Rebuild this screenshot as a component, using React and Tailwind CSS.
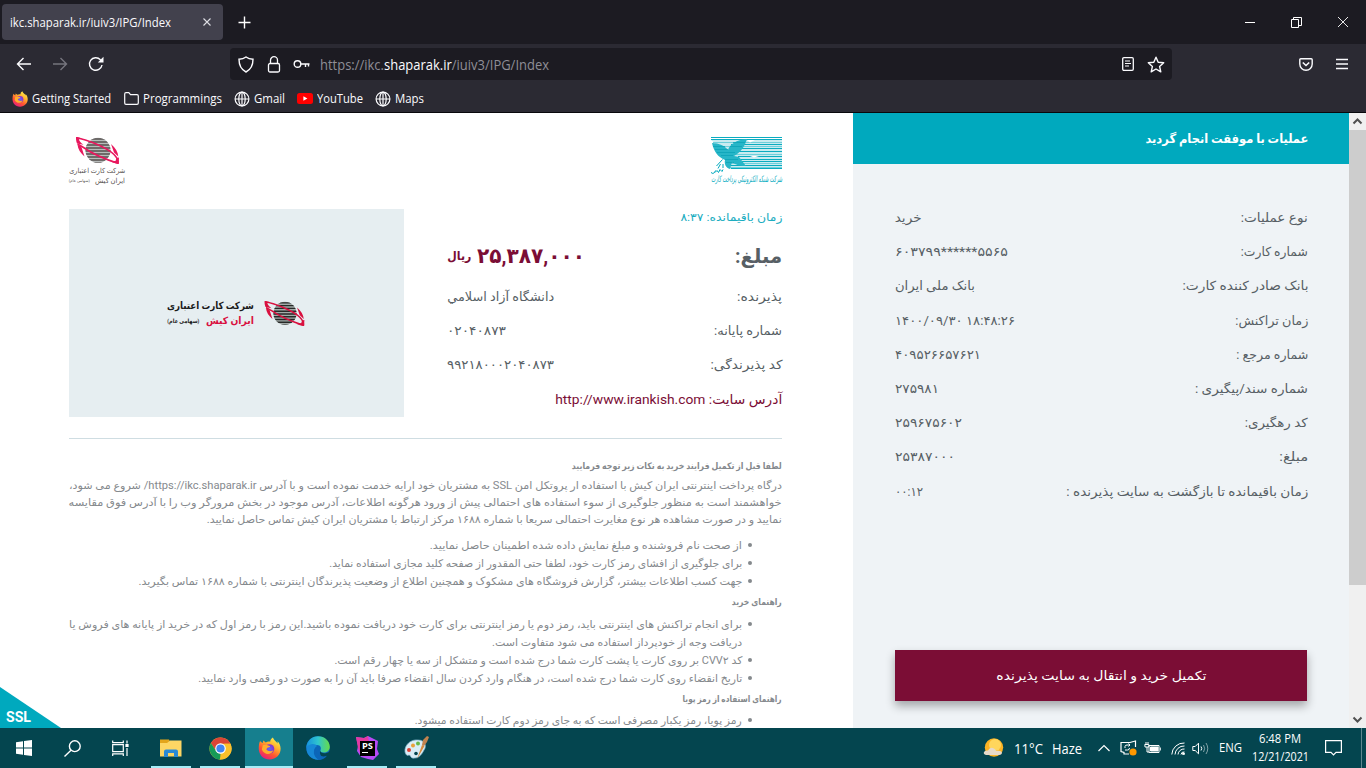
import { useLayoutEffect, useRef } from "react";

/* Scales one line of text horizontally so that it fills its box. */
function Fit({ children, className = "", rtl = false }) {
  const box = useRef(null);
  const inner = useRef(null);
  useLayoutEffect(() => {
    const fit = () => {
      const w = inner.current.getBoundingClientRect().width / (inner.current._s || 1);
      const s = box.current.clientWidth / w;
      inner.current._s = s;
      inner.current.style.transform = `scaleX(${s})`;
    };
    fit();
    if (document.fonts) document.fonts.ready.then(fit);
  }, []);
  return (
    <span ref={box} dir={rtl ? "rtl" : "ltr"} className={"flex shrink-0 " + className}>
      <span ref={inner} className={"shrink-0 whitespace-nowrap " + (rtl ? "origin-right" : "origin-left")}>{children}</span>
    </span>
  );
}

const FA = "font-['Roboto','DejaVu_Sans',sans-serif]";
const UI = "font-['Open_Sans','Noto_Sans',sans-serif]";

function FirefoxIcon({ className, id }) {
  return (
    <svg className={className} viewBox="0 0 24 24">
      <defs>
        <linearGradient id={id + "a"} x1="0.8" y1="0" x2="0.2" y2="1">
          <stop offset="0" stopColor="#fff44f" /><stop offset="0.35" stopColor="#ffb02e" />
          <stop offset="0.65" stopColor="#ff5630" /><stop offset="1" stopColor="#e31587" />
        </linearGradient>
        <radialGradient id={id + "b"}><stop offset="0" stopColor="#5b6df8" /><stop offset="1" stopColor="#8b2fc9" /></radialGradient>
      </defs>
      <path fill={`url(#${id}a)`} d="M15.500 0.500c-2 1.200-2.700 2.800-2.800 4.400-1.800-.3-3.500 0-4.600.8L5.500 3.700 5 6.200C3.700 6 2.500 4.800 2.200 4.200 1.300 6 1 8 .8 10.500.2 18 5 23.500 12 23.500S23.800 18 23.600 12c-.1-3.500-1.500-5.800-3.300-7.500l.2 2.200C19 4.200 16.500 3.500 15.500.5z" />
      <circle cx="12" cy="12.500" r="5" fill={`url(#${id}b)`} />
      <path fill="#ffae2c" d="M5 8.500c2 0 4-.2 6.500.5 1 .3 1.800 1.200 0 1.800-1.700.5-2.500 1-2.700 2.300 1.500 1.700 4.500 2.500 7.200.7-1.600 5-9.500 5.500-12-.8z" />
    </svg>
  );
}

function Globe() {
  return (
    <svg className="h-[16px] w-[16px] shrink-0" viewBox="0 0 16 16" fill="none" stroke="#fbfbfe" strokeWidth="1.200">
      <circle cx="8" cy="8" r="6.900" /><ellipse cx="8" cy="8" rx="3.200" ry="6.900" /><path d="M1 8h14M8 1v14" />
    </svg>
  );
}

function Planet({ className, id, red = "#e8175d", dark = "#55504f", light = "#b8bcbb" }) {
  return (
    <svg className={className} viewBox="0 0 43 27">
      <clipPath id={id}><circle cx="22" cy="13.300" r="12.500" /></clipPath>
      <g clipPath={`url(#${id})`}>
        <rect x="8" width="28" height="27" fill={light} />
        <path stroke={dark} strokeWidth="1.500" d="M8 2h28M8 5h28M8 8h28M8 11h28M8 14h28M8 17h28M8 20h28M8 23h28M8 26h28" />
      </g>
      <path fill="none" stroke={red} strokeWidth="1.600" d="M.8 1C10 2 31 10.500 38 17.500c3.500 3.500 4.500 6 4 8.700C30 22.500 16 16.500 7.500 10.500 5 8.800 3 7.500 1.500 7.200" />
      <path fill={red} d="M0 0c2 0 4 .6 6.500 1.500L3 2c0 2 1.500 3.500 4.500 5.800L1 6.500C.2 4.500-.2 2 0 0zM1.500 7.500l3.800 2L8.500 19.500C4.500 16 1.800 12 1.500 7.500zM35 7c4.500 4 7 8 7.300 12.500L38 15.500zM43 20.500l-.5 6.500C39.500 26.500 37 25.700 34 24.500l5.500-.5 1-3z" />
    </svg>
  );
}

function ShaparakLogo() {
  return (
    <div className="relative h-[49px] w-[71px] text-[#00a9be]">
      <svg className="block h-[33px] w-[71px]" viewBox="0 0 71 33">
        <path fill="#c9ebf0" d="M0 3h72v29H19l-6-11L2 14l2-8z" />
        <path stroke="#0aacc0" strokeWidth="1" d="M0 .5h72M0 2.500h72M20 7.500h52M22 11.500h50M25 14.500h47M27 19.500h45M14 22.500h58M14 24.500h58M18 28.500h54M20 31.500h52" />
        <path stroke="#6fcfda" strokeWidth="1" d="M2 5.500h70M3 9.500h69M24 17.500h48M15 26.500h57M18 30.500h54" />
        <path fill="#fff" d="M0 6l11 15.500 2 1.500v9.500H0zM13 23l6 9.500h-6z" />
        <path fill="#27b6c8" d="M1 6c7 0 13 3 16 7 2-6 8-10 19-11-2 7-6 13-13 17l5 1 7 9c-6 0-10-1-14-4l-2 7c-4-1-6-5-5-9C7 20 3 15 1 6z" />
        <path stroke="#0ba3b8" strokeWidth=".8" d="M2 9.500h12M4 12.500h13M6 15.500h18M10 18.500h12M14 22.500h13M15 25.500h8M22 5.500h12M19 9.500h12" />
        <path fill="#fff" d="M36 3l8 0-5 2.500zM39 19l9 0-5 1.500z" />
      </svg>
      <svg className="absolute top-[22px] left-0 h-[16px] w-[14px]" viewBox="0 0 14 16" fill="none" stroke="#00a9be" strokeWidth="1"><path d="M0 13.500q2 2 3.500 0l1-2M4 13.500l2-2 1.500 2 1.500-3 2 2 1-2M11.500 .5L5.500 7M9.500 5L7 9.500M12 5v4" /></svg>
      <Fit rtl className="mt-[3px] h-[13px] w-[71px] text-[9px] leading-[13px] font-['DejaVu_Sans',sans-serif] italic">شرکت شبکه الکترونیکی پرداخت کارت</Fit>
    </div>
  );
}

function BrowserChrome() {
  const S = "none";
  return (
    <header dir="ltr" className={"flex h-[113px] shrink-0 flex-col border-b border-[#08080c] bg-[#2b2a33] text-[#fbfbfe] " + UI}>
      <div className="flex h-[44px] items-center bg-[#1c1b22] pl-[2px]">
        <div className="flex h-[36px] w-[221px] items-center rounded-[4px] bg-[#42414d] pl-[8px]">
          <Fit className="w-[161px] pt-[1px] text-[12px]">ikc.shaparak.ir/iuiv3/IPG/Index</Fit>
          <svg className="ml-[31px] h-[10px] w-[10px]" viewBox="0 0 10 10"><path d="M1.500 1.500l7 7M8.500 1.500l-7 7" stroke="#dedee4" strokeWidth="1.100" /></svg>
        </div>
        <svg className="ml-[15px] h-[13px] w-[13px]" viewBox="0 0 13 13"><path d="M6.500 .5v12M.5 6.500h12" stroke="#fff" strokeWidth="1.400" /></svg>
        <div className="ml-auto flex items-center gap-[35px] pr-[17px]">
          <svg className="h-[11px] w-[12px]" viewBox="0 0 12 11"><path d="M1 5.500h10" stroke="#fff" /></svg>
          <svg className="h-[11px] w-[11px]" viewBox="0 0 11 11" fill="none" stroke="#fff"><path d="M.5 2.500h7v8h-7zM2.500 2.500v-2h8v8h-3" /></svg>
          <svg className="h-[12px] w-[12px]" viewBox="0 0 12 12"><path d="M1 1l10 10M11 1L1 11" stroke="#fff" strokeWidth=".9" /></svg>
        </div>
      </div>
      <div className="flex h-[40px] items-center pl-[16px]">
        <svg className="h-[14px] w-[16px]" viewBox="0 0 16 14" fill={S} stroke="#fbfbfe" strokeWidth="1.400"><path d="M15 7H1.500M7.500 1l-6 6 6 6" /></svg>
        <svg className="ml-[20px] h-[14px] w-[16px]" viewBox="0 0 16 14" fill={S} stroke="#76757e" strokeWidth="1.400"><path d="M1 7h13.500M8.500 1l6 6-6 6" /></svg>
        <svg className="ml-[20px] h-[16px] w-[16px]" viewBox="0 0 16 16" fill={S} stroke="#fbfbfe" strokeWidth="1.400"><path d="M14 9a6.300 6.300 0 1 1-1.600-5.300L14.500 5.500" /><path fill="#fbfbfe" stroke="none" d="M15.500 .8v5.700H9.800z" /></svg>
        <div className="ml-[126px] flex h-[32px] w-[942px] items-center rounded-[4px] bg-[#1c1b22] pl-[8px]">
          <svg className="h-[17px] w-[16px]" viewBox="0 0 16 17" fill={S} stroke="#fbfbfe" strokeWidth="1.400"><path d="M8 1c2 1.600 4.500 2.300 7 2.300 0 6-1.500 10-7 12.700C2.500 13.300 1 9.300 1 3.300 3.500 3.300 6 2.600 8 1z" /></svg>
          <svg className="ml-[13px] h-[17px] w-[14px]" viewBox="0 0 14 17" fill={S} stroke="#fbfbfe" strokeWidth="1.300"><rect x="1.500" y="7.500" width="11" height="8.500" rx="1.500" /><path d="M3.500 7.500V4.200a3.500 3.500 0 0 1 7 0v3.300" /></svg>
          <svg className="ml-[12px] h-[10px] w-[17px]" viewBox="0 0 17 10" fill={S} stroke="#fbfbfe" strokeWidth="1.400"><circle cx="4.500" cy="5" r="3.300" /><path d="M8 5h8.500M12.500 5v3M15.500 5v2.500" /></svg>
          <Fit className="ml-[10px] w-[229px] pt-[2px] text-[14px] leading-[20px]"><span className="text-[#8f8e96]">https://ikc.</span>shaparak.ir<span className="text-[#8f8e96]">/iuiv3/IPG/Index</span></Fit>
          <svg className="ml-auto h-[14px] w-[12px]" viewBox="0 0 12 14" fill={S} stroke="#fbfbfe" strokeWidth="1.300"><rect x=".7" y=".7" width="10.600" height="12.600" rx="1.200" /><path d="M3 4h5M3 6.500h6M3 9h4" strokeWidth="1" /></svg>
          <svg className="mr-[7px] ml-[13px] h-[17px] w-[18px]" viewBox="0 0 18 17" fill={S} stroke="#fbfbfe" strokeWidth="1.400" strokeLinejoin="round"><path d="M9 1.200l2.200 5 5.500.5-4.100 3.700 1.200 5.400L9 13l-4.800 2.800 1.200-5.400L1.300 6.700l5.500-.5z" /></svg>
        </div>
        <svg className="ml-[127px] h-[13px] w-[14px]" viewBox="0 0 14 13" fill={S} stroke="#fbfbfe" strokeWidth="1.400"><path d="M1.800 .8h10.400q1 0 1 1V6a6.200 6.200 0 0 1-12.400 0V1.800q0-1 1-1z" /><path d="M3.800 4.500L7 7.500l3.200-3" strokeWidth="1.600" /></svg>
        <svg className="ml-[23px] h-[12px] w-[12px]" viewBox="0 0 12 12"><path d="M0 1.500h12M0 6h12M0 10.500h12" stroke="#fbfbfe" strokeWidth="1.300" /></svg>
      </div>
      <div className="flex h-[28px] items-center pt-[1px] pl-[12px] text-[12px] leading-[20px]">
        <FirefoxIcon className="h-[16px] w-[16px]" id="fb" />
        <Fit className="ml-[4px] w-[79px]">Getting Started</Fit>
        <svg className="ml-[13px] h-[13px] w-[15px]" viewBox="0 0 15 13" fill={S} stroke="#fbfbfe" strokeWidth="1.200"><path d="M.7 11V2q0-1.300 1.300-1.300h2.800L6.500 2.600H13q1.300 0 1.300 1.300V11q0 1.300-1.300 1.300H2Q.7 12.300 .7 11z" /></svg>
        <Fit className="ml-[4px] w-[79px]">Programmings</Fit>
        <div className="ml-[12px] flex items-center"><Globe /><Fit className="ml-[4px] w-[31px]">Gmail</Fit></div>
        <svg className="ml-[12px] h-[11px] w-[16px]" viewBox="0 0 16 11"><rect width="16" height="11" rx="2.500" fill="#f00" /><path d="M6.400 3.200v4.600l4-2.300z" fill="#fff" /></svg>
        <Fit className="ml-[4px] w-[46px]">YouTube</Fit>
        <div className="ml-[12px] flex items-center"><Globe /><Fit className="ml-[4px] w-[29px]">Maps</Fit></div>
      </div>
    </header>
  );
}

const MERCHANT = [
  ["پذیرنده:", "w-[45px]", "دانشگاه آزاد اسلامي", "w-[107px]", true],
  ["شماره پایانه:", "w-[68px]", "۰۲۰۴۰۸۷۳", "w-[59px]"],
  ["کد پذیرندگی:", "w-[72px]", "۹۹۲۱۸۰۰۰۲۰۴۰۸۷۳", "w-[107px]"],
];

const RECEIPT = [
  ["نوع عملیات:", "w-[67px]", "خرید", "w-[27px]", true],
  ["شماره کارت:", "w-[67px]", "۶۰۳۷۹۹******۵۵۶۵", "w-[113px]"],
  ["بانک صادر کننده کارت:", "w-[126px]", "بانک ملی ایران", "w-[80px]", true],
  ["زمان تراکنش:", "w-[73px]", "۱۴۰۰/۰۹/۳۰ ۱۸:۴۸:۲۶", "w-[120px]"],
  ["شماره مرجع :", "w-[72px]", "۴۰۹۵۲۶۶۵۷۶۲۱", "w-[86px]"],
  ["شماره سند/پیگیری :", "w-[113px]", "۲۷۵۹۸۱", "w-[44px]"],
  ["کد رهگیری:", "w-[63px]", "۲۵۹۶۷۵۶۰۲", "w-[67px]"],
  ["مبلغ:", "w-[29px]", "۲۵۳۸۷۰۰۰", "w-[60px]"],
  ["زمان باقیمانده تا بازگشت به سایت پذیرنده :", "w-[242px]", "۰۰:۱۲", "w-[28px]"],
];

function Bullet({ w, children, dot = true }) {
  return (
    <li className="flex h-[18px] items-center">
      <span className="flex w-[40px] shrink-0 justify-end pl-[6px]">
        <span className={"h-[4px] w-[4px] rounded-full " + (dot ? "bg-[#85898d]" : "")} />
      </span>
      <Fit rtl className={w}>{children}</Fit>
    </li>
  );
}

function Payment() {
  return (
    <main dir="rtl" className="relative h-[615px] w-[853px] shrink-0 overflow-hidden bg-white pr-[71px] pl-[69px]">
      <div className="flex h-[96px] items-start justify-between pt-[24px]">
        <ShaparakLogo />
        <div className="flex w-[56px] flex-col items-center text-[#55504f]">
          <Planet id="p1" className="h-[27px] w-[43px]" />
          <Fit rtl className={"mt-[2px] w-[56px] text-[7px] leading-[10px] " + FA}>شرکت کارت اعتباری</Fit>
          <div className="flex w-[56px] justify-between">
            <Fit rtl className={"w-[30px] text-[7px] leading-[10px] " + FA}>ایران کیش</Fit>
            <Fit rtl className={"w-[21px] text-[4px] leading-[10px] " + FA}>(سهامی عام)</Fit>
          </div>
        </div>
      </div>
      <section className="flex h-[208px] justify-between">
        <div className={"w-[335px] text-[12.500px] leading-[20px] text-[#575f65] " + FA}>
          <Fit rtl className="h-[27px] w-[102px] text-[11px] leading-[17px] text-[#1badbf]">زمان باقیمانده: ۸:۳۷</Fit>
          <div className="flex h-[44px] items-center justify-between">
            <Fit rtl className="w-[47px] pb-[4px] text-[20px] leading-[36px] font-bold">مبلغ:</Fit>
            <div className="flex items-center gap-[6px] pb-[5px] font-bold text-[#7b0d35]">
              <Fit className="w-[108px] text-[21px] leading-[30px]">۲۵,۳۸۷,۰۰۰</Fit>
              <Fit rtl className="w-[24px] text-[12px] leading-[30px]">ریال</Fit>
            </div>
          </div>
          {MERCHANT.map(([l, lw, v, vw, r]) => (
            <div key={l} className="flex h-[34px] items-center justify-between"><Fit rtl className={lw}>{l}</Fit><Fit rtl={!!r} className={vw}>{v}</Fit></div>
          ))}
          <div className="flex h-[34px] items-center text-[#7b0d35]"><Fit rtl className="w-[227px] text-[13.500px]">آدرس سایت: http://www.irankish.com</Fit></div>
        </div>
        <div className={"flex h-[208px] w-[335px] items-center justify-center gap-[10px] bg-[#e6eef1] pr-[1px] text-[#1b1b1b] " + FA}>
          <Planet id="p2" className="h-[25px] w-[41px]" red="#d9103f" dark="#272a28" light="#a3aba9" />
          <div className="w-[87px] text-[10px] leading-[15px] font-bold">
            <Fit rtl className="w-[87px]">شرکت کارت اعتباری</Fit>
            <div className="flex justify-between"><Fit rtl className="w-[48px] text-[#d9103f]">ایران کیش</Fit><Fit rtl className="w-[32px] text-[6px]">(سهامی عام)</Fit></div>
          </div>
        </div>
      </section>
      <div className="mt-[21px] h-[1px] bg-[#cfdde2]" />
      <section className={"pt-[18px] text-[10.500px] leading-[17px] text-[#85898d] " + FA}>
        <Fit rtl className="h-[20px] w-[210px] text-[9px] leading-[18px] font-bold">لطفا قبل از تکمیل فرایند خرید به نکات زیر توجه فرمایید</Fit>
        <Fit rtl className="h-[17px] w-[713px]">درگاه پرداخت اینترنتی ایران کیش با استفاده ار پروتکل امن SSL به مشتریان خود ارایه خدمت نموده است و با آدرس https://ikc.shaparak.ir/ شروع می شود،</Fit>
        <Fit rtl className="h-[17px] w-[713px]">خواهشمند است به منظور جلوگیری از سوء استفاده های احتمالی پیش از ورود هرگونه اطلاعات، آدرس موجود در بخش مرورگر وب را با آدرس فوق مقایسه</Fit>
        <Fit rtl className="h-[25px] w-[575px]">نمایید و در صورت مشاهده هر نوع مغایرت احتمالی سریعا با شماره ۱۶۸۸ مرکز ارتباط با مشتریان ایران کیش تماس حاصل نمایید.</Fit>
        <ul>
          <Bullet w="w-[312px]">از صحت نام فروشنده و مبلغ نمایش داده شده اطمینان حاصل نمایید.</Bullet>
          <Bullet w="w-[413px]">برای جلوگیری از افشای رمز کارت خود، لطفا حتی المقدور از صفحه کلید مجازی استفاده نماید.</Bullet>
          <Bullet w="w-[604px]">جهت کسب اطلاعات بیشتر، گزارش فروشگاه های مشکوک و همچنین اطلاع از وضعیت پذیرندگان اینترنتی با شماره ۱۶۸۸ تماس بگیرید.</Bullet>
        </ul>
        <Fit rtl className="mt-[3px] h-[22px] w-[50px] text-[9px] leading-[18px] font-bold">راهنمای خرید</Fit>
        <ul>
          <Bullet w="w-[673px]">برای انجام تراکنش های اینترنتی باید، رمز دوم یا رمز اینترنتی برای کارت خود دریافت نموده باشید.این رمز با رمز اول که در خرید از پایانه های فروش یا</Bullet>
          <Bullet dot={false} w="w-[250px]">دریافت وجه از خودپرداز استفاده می شود متفاوت است.</Bullet>
          <Bullet w="w-[408px]">کد CVV۲ بر روی کارت یا پشت کارت شما درج شده است و متشکل از سه یا چهار رقم است.</Bullet>
          <Bullet w="w-[544px]">تاریخ انقضاء روی کارت شما درج شده است، در هنگام وارد کردن سال انقضاء صرفا باید آن را به صورت دو رقمی وارد نمایید.</Bullet>
        </ul>
        <Fit rtl className="mt-[3px] h-[21px] w-[99px] text-[9px] leading-[18px] font-bold">راهنمای استفاده از رمز پویا</Fit>
        <ul><Bullet w="w-[327px]">رمز پویا، رمز یکبار مصرفی است که به جای رمز دوم کارت استفاده میشود.</Bullet></ul>
      </section>
      <div dir="ltr" className="absolute bottom-0 left-0 flex h-[41px] w-[61px] items-end bg-[#00a9be] pb-[2px] pl-[6px] [clip-path:polygon(0_0,100%_100%,0_100%)]">
        <Fit className="w-[25px] font-['Roboto',sans-serif] text-[14px] leading-[17px] font-bold text-white">SSL</Fit>
      </div>
    </main>
  );
}

function Receipt() {
  return (
    <aside dir="rtl" className={"flex w-[496px] shrink-0 flex-col bg-[#eff3f6] text-[12.500px] leading-[20px] text-[#575f65] " + FA}>
      <div className="flex h-[51px] items-center bg-[#00a9be] pr-[41px] text-white"><Fit rtl className="w-[163px] font-bold">عملیات با موفقت انجام گردید</Fit></div>
      <div className="pt-[37px] pr-[41px] pl-[42px]">
        {RECEIPT.map(([l, lw, v, vw, r]) => (
          <div key={l} className="flex h-[34.200px] items-center justify-between"><Fit rtl className={lw}>{l}</Fit><Fit rtl={!!r} className={vw}>{v}</Fit></div>
        ))}
      </div>
      <button className="mt-auto mr-[42px] mb-[27px] flex h-[51px] w-[412px] items-center justify-center bg-[#7b0d35] text-white shadow-[0_5px_9px_rgba(0,0,0,0.32)]">
        <Fit rtl className="w-[210px]">تکمیل خرید و انتقال به سایت پذیرنده</Fit>
      </button>
    </aside>
  );
}

function Scrollbar() {
  return (
    <div dir="ltr" className="flex w-[17px] shrink-0 flex-col items-center bg-[#f0f0f0]">
      <svg className="h-[17px] w-[17px]" viewBox="0 0 17 17"><path d="M4.500 10.500l4-4 4 4" fill="none" stroke="#505050" strokeWidth="2" /></svg>
      <div className="h-[455px] w-full bg-[#cdcdcd]" />
      <svg className="mt-auto h-[17px] w-[17px]" viewBox="0 0 17 17"><path d="M4.500 6.500l4 4 4-4" fill="none" stroke="#505050" strokeWidth="2" /></svg>
    </div>
  );
}

function TaskCell({ children, className = "", bar = "" }) {
  return (
    <div className={"flex h-[40px] shrink-0 flex-col items-center justify-between " + className}>
      <div className="flex h-[38px] items-center justify-center pt-[2px]">{children}</div>
      <div className={"h-[2px] " + bar} />
    </div>
  );
}

function Taskbar() {
  return (
    <footer dir="ltr" className={"flex h-[40px] shrink-0 bg-[#04454f] text-white " + UI}>
      <TaskCell className="w-[48px]"><svg className="h-[16px] w-[16px]" viewBox="0 0 16 16" fill="#fff"><path d="M0 2.200L7 1.200v6.300H0zM8 1l8-1v7.500H8zM0 8.500h7v6.300l-7-1zM8 8.500h8V16l-8-1z" /></svg></TaskCell>
      <TaskCell className="w-[48px]"><svg className="h-[17px] w-[17px]" viewBox="0 0 17 17" fill="none" stroke="#fff" strokeWidth="1.400"><circle cx="10.800" cy="6.200" r="5.400" /><path d="M7 10.200L.5 16.500" /></svg></TaskCell>
      <TaskCell className="w-[48px]"><svg className="h-[16px] w-[17px]" viewBox="0 0 17 16" fill="none" stroke="#fff" strokeWidth="1.200"><path d="M.7 4.600h10.600v7H.7zM.7 .500v2.200h10.600V.500M.7 16v-2.200h10.600V16M15 .500v3M15 8v8" /><path fill="#fff" d="M14 4.500h2v2h-2z" /></svg></TaskCell>
      <TaskCell className="ml-[3px] w-[48px]" bar="w-[40px] bg-[#a5edf7]">
        <svg className="h-[18px] w-[22px]" viewBox="0 0 22 18"><path fill="#e3a51b" d="M0 .5h9l1 2h-1l-1 3H0z" /><path fill="#fdd664" d="M0 4h7l3-2.500h11.500V17.500H0z" /><path fill="#2b8ad5" d="M4 18v-5.500Q4 10.500 6 10.500h10q2 0 2 2V18h-4v-4H8v4z" /></svg>
      </TaskCell>
      <TaskCell className="ml-[1px] w-[48px]" bar="w-[40px] bg-[#a5edf7]">
        <svg className="h-[23px] w-[23px]" viewBox="0 0 24 24"><circle cx="12" cy="12" r="11.500" fill="#fbc02d" /><path fill="#db4437" d="M2 6.300A11.500 11.500 0 0 1 22.400 7H12v5l-5 2z" /><path fill="#169b58" d="M2 6.300l5.400 8.200L12 17.500 11.500 23.500A11.500 11.500 0 0 1 2 6.300z" /><path fill="#fbc02d" d="M11 23.500L17 12l-1-5h6.400A11.500 11.500 0 0 1 11 23.500z" /><circle cx="12" cy="12" r="5.500" fill="#fff" /><circle cx="12" cy="12" r="4.300" fill="#4285f4" /></svg>
      </TaskCell>
      <TaskCell className="ml-[1px] w-[48px] bg-[#167f8e]" bar="w-[48px] bg-[#a5edf7]"><FirefoxIcon className="h-[23px] w-[23px]" id="ft" /></TaskCell>
      <TaskCell className="ml-[1px] w-[48px]">
        <svg className="h-[24px] w-[24px]" viewBox="0 0 24 24">
          <defs><linearGradient id="eg"><stop offset="0" stopColor="#1692dd" /><stop offset=".5" stopColor="#2fc5cf" /><stop offset="1" stopColor="#66dc48" /></linearGradient></defs>
          <circle cx="12" cy="12" r="11.800" fill="#0c66b8" />
          <path fill="url(#eg)" d="M.3 11.500C.8 4.500 6 .2 12 .2c7 0 11.800 5 11.800 10.500 0 4-3 5.800-6 5.800-2.500 0-4-1-3.500-2 1.300-1.700.7-5.500-3.300-5.500C6 9 1.500 11 .3 11.500z" />
          <path fill="#04454f" d="M14.500 14.200c-.5 1.800 1.200 3 3.800 3 2 0 3.900-.5 5.500-2V24h-3l-.7-3.200c-3.600 1.300-7.600-2.100-5.600-6.600z" />
          <path fill="#1788d6" d="M.5 11C5 6.500 10 8 11 10c-4 2-4 9.500 2 13.800C5 24 0 18 .5 11z" />
          <path fill="#0c66b8" d="M10.500 11c-2.500 5 2.500 11.500 10.500 8.700-2.500 3.200-5.500 4.200-8 4.200-6-3-6.500-10-2.500-12.900z" />
        </svg>
      </TaskCell>
      <TaskCell className="ml-[1px] w-[48px]" bar="w-[40px] bg-[#a5edf7]">
        <div className="relative flex h-[24px] w-[24px] items-center justify-center">
          <svg className="absolute inset-0 h-[24px] w-[24px]" viewBox="0 0 24 24"><path fill="#b74af7" d="M1 1l8 1 4-2 6 3 4 2-1 8 2 5-6 6-5-1-7-2-4-6 1-5z" /><path fill="#e33aa1" d="M1 1l8 1 4-2 1 6-9 11-2-5z" /></svg>
          <div className="relative flex h-[15px] w-[15px] flex-col items-start bg-black pl-[2px] font-['Open_Sans',sans-serif] text-[8px] leading-[10px] font-bold"><Fit className="w-[11px]">PS</Fit><span className="mt-[1px] h-[1px] w-[6px] bg-white" /></div>
        </div>
      </TaskCell>
      <TaskCell className="ml-[1px] w-[48px]" bar="w-[40px] bg-[#a5edf7]">
        <svg className="h-[24px] w-[25px]" viewBox="0 0 25 24"><path fill="#d9edf5" stroke="#84b6cd" strokeWidth=".7" d="M1 16C0 9 7 3 14 4c7 0 9 6 6 10-2 4-5 8-9 8-5 1-4-3-6-3-2 1-3 0-4-3z" /><circle cx="5" cy="14" r="2" fill="#dc4034" /><circle cx="9" cy="9.500" r="2" fill="#e9a13b" /><circle cx="14" cy="7.500" r="2" fill="#67b84a" /><circle cx="12" cy="17.500" r="1.800" fill="#04454f" /><path fill="#d98b3f" d="M13 23l5-14 2.500 1z" /><path fill="#c1824e" d="M18 9l1-5 4-4 2 1-2 5-3 4z" /></svg>
      </TaskCell>
      <div className="ml-auto flex items-center text-[14px] leading-[20px]">
        <svg className="h-[20px] w-[21px]" viewBox="0 0 21 20"><circle cx="11" cy="9.500" r="9.200" fill="#fbb324" /><circle cx="12" cy="7" r="6" fill="#ffd65c" /><path fill="#e7d9c8" d="M3 17q-3-1-2-3 1-2 4-1.500 2-4 6-2 2 1 2 2.500 5-1 6 1.500 0 2-3 2.500z" /></svg>
        <Fit className="ml-[10px] w-[29px] pt-[1px]">11°C</Fit><Fit className="ml-[9px] w-[30px] pt-[1px]">Haze</Fit>
        <svg className="ml-[16px] h-[8px] w-[12px]" viewBox="0 0 12 8"><path d="M.5 7L6 1.500 11.500 7" fill="none" stroke="#fff" strokeWidth="1.200" /></svg>
        <svg className="ml-[10px] h-[16px] w-[17px]" viewBox="0 0 17 16" fill="none" stroke="#fff" strokeWidth="1.200"><path d="M15.500 7V1L10 2.500H1v9l3 1v1.500h5" /><path d="M5 8V6.500q0-1.500 2-1.500h2.500M8.500 3.500L10 5 8.500 6.500M5 10h2.500q2 0 2-2" strokeWidth="1" /><circle cx="13" cy="12" r="3.600" fill="#ff9800" stroke="none" /></svg>
        <svg className="ml-[7px] h-[12px] w-[17px]" viewBox="0 0 17 12" fill="none" stroke="#fff"><path d="M5 3.500h10v7H5zM16.300 5.500v3M2 0v2M4 0v2M.8 2.500h4V5H1zM3 5v5h2" /><path fill="#fff" d="M6.500 5H14v4H6.500z" /></svg>
        <svg className="ml-[10px] h-[13px] w-[14px]" viewBox="0 0 14 13" fill="none" stroke="#fff"><path d="M.8 12.500A12 12 0 0 1 13.500 1M4 12.500A9 9 0 0 1 13.500 4M7 12.500a6 6 0 0 1 6.500-5.500M10 12.500a3 3 0 0 1 3.500-2.500" /><circle cx="12.500" cy="11.800" r="1" fill="#fff" /></svg>
        <svg className="ml-[7px] h-[13px] w-[17px]" viewBox="0 0 17 13" fill="none" stroke="#fff"><path d="M.8 4.500h2.400l3.300-3.300v10.600L3.200 8.500H.8z" /><path d="M9 4.500q1.500 2 0 4" /><path d="M11.500 3q2.300 3.500 0 7M14 1q3.500 5.500 0 11" opacity=".5" /></svg>
        <Fit className="ml-[10px] w-[23px] text-[12px]">ENG</Fit>
        <div className="ml-[9px] flex w-[58px] flex-col items-center text-[12px] leading-[18px]"><Fit className="w-[42px]">6:48 PM</Fit><Fit className="w-[57px]">12/21/2021</Fit></div>
        <svg className="ml-[16px] h-[16px] w-[17px]" viewBox="0 0 17 16"><path d="M.6 .6h15.800v11.800H11l-2.500 2.600L6 12.400H.6z" fill="none" stroke="#fff" strokeWidth="1.200" /></svg>
        <div className="mr-[4px] ml-[19px] h-[40px] w-[1px] bg-[#5d888f]" />
      </div>
    </footer>
  );
}

export default function App() {
  return (
    <div dir="ltr" className="flex h-[768px] w-[1366px] flex-col overflow-hidden bg-white">
      <BrowserChrome />
      <div className="flex h-[615px] shrink-0"><Payment /><Receipt /><Scrollbar /></div>
      <Taskbar />
    </div>
  );
}
